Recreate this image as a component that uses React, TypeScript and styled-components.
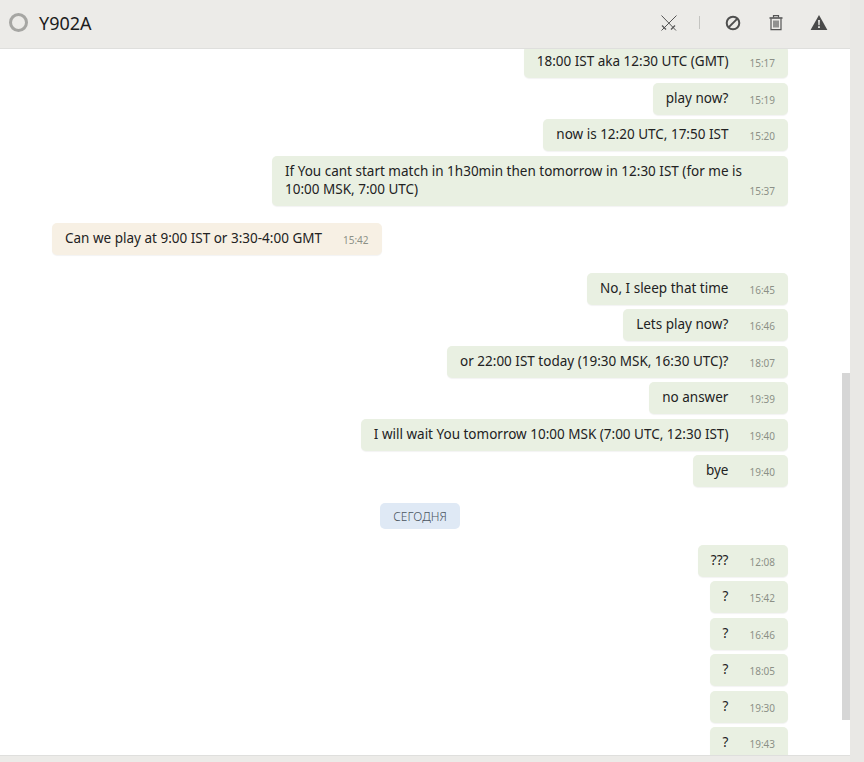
import React from "react";
import styled, { createGlobalStyle } from "styled-components";

type Message = { text: React.ReactNode; time: string; from?: "me" | "them"; gap?: number };

const before: Message[] = [
    { text: "18:00 IST aka 12:30 UTC (GMT)", time: "15:17" },
    { text: "play now?", time: "15:19" },
    { text: "now is 12:20 UTC, 17:50 IST", time: "15:20" },
    {
        text: "If You cant start match in 1h30min then tomorrow in 12:30 IST (for me is 10:00 MSK, 7:00 UTC)",
        time: "15:37",
        gap: 5,
    },
];

const after: Message[] = [
    { text: "No, I sleep that time", time: "16:45" },
    { text: "Lets play now?", time: "16:46" },
    { text: "or 22:00 IST today (19:30 MSK, 16:30 UTC)?", time: "18:07" },
    { text: "no answer", time: "19:39" },
    { text: "I will wait You tomorrow 10:00 MSK (7:00 UTC, 12:30 IST)", time: "19:40" },
    { text: "bye", time: "19:40" },
];

const today: Message[] = [
    { text: "???", time: "12:08" },
    { text: "?", time: "15:42" },
    { text: "?", time: "16:46" },
    { text: "?", time: "18:05" },
    { text: "?", time: "19:30" },
    { text: "?", time: "19:43" },
];

const Bubbles = ({ items }: { items: Message[] }) => (
    <Group>
        {items.map((m) => (
            <Bubble key={m.time + m.text} $from={m.from ?? "me"} $gap={m.gap ?? 21}>
                <BubbleText>{m.text}</BubbleText>
                <Time>{m.time}</Time>
            </Bubble>
        ))}
    </Group>
);

export default function App() {
    return (
        <>
            <GlobalStyle />
            <Page>
                <Main>
                    <Header>
                        <Contact>
                            <StatusRing />
                            <ContactName>Y902A</ContactName>
                        </Contact>
                        <Actions>
                            <IconSlot $width={40}>
                                <svg width="20" height="20" viewBox="0 0 20 20" fill="none" stroke="#555" strokeWidth="1">
                                    <path d="M3.5 2.5 L18 17.5" />
                                    <path d="M18.5 2.5 L3.5 17.5" />
                                    <path d="M4 12.5 L8 16.5" strokeWidth="1.2" />
                                    <path d="M17 12.5 L13 16.5" strokeWidth="1.2" />
                                </svg>
                            </IconSlot>
                            <Divider />
                            <IconSlot $width={42}>
                                <svg width="18" height="18" viewBox="0 0 18 18" fill="none" stroke="#4f4f4f" strokeWidth="2">
                                    <circle cx="9" cy="9" r="6.3" />
                                    <path d="M4.6 13.4 L13.4 4.6" />
                                </svg>
                            </IconSlot>
                            <IconSlot $width={43}>
                                <svg width="16" height="18" viewBox="0 0 16 18" fill="none" stroke="#555" strokeWidth="1.2">
                                    <path d="M1.5 4 H14.5" strokeWidth="1.6" />
                                    <path d="M5.5 3.5 V1.7 H10.5 V3.5" />
                                    <path d="M3 4.5 V15.6 H13 V4.5" />
                                    <path d="M6 6.5 V13.5 M8 6.5 V13.5 M10 6.5 V13.5" />
                                </svg>
                            </IconSlot>
                            <IconSlot $width={43}>
                                <svg width="18" height="18" viewBox="0 0 18 18">
                                    <path d="M9 1 L17.4 16 H0.6 Z" fill="#4a4a4a" />
                                    <path d="M8.1 6 H9.9 L9.6 11.3 H8.4 Z M8.1 12.3 H9.9 V14 H8.1 Z" fill="#ecebe8" />
                                </svg>
                            </IconSlot>
                        </Actions>
                    </Header>
                    <Body>
                        <MessageList>
                            <Feed>
                                <Bubbles items={before} />
                                <Incoming>
                                    <Bubbles items={[{ text: "Can we play at 9:00 IST or 3:30-4:00 GMT", time: "15:42", from: "them" }]} />
                                </Incoming>
                                <Bubbles items={after} />
                                <DateRow>
                                    <DateChip>СЕГОДНЯ</DateChip>
                                </DateRow>
                                <Bubbles items={today} />
                            </Feed>
                        </MessageList>
                        <ScrollTrack>
                            <ScrollThumb />
                        </ScrollTrack>
                    </Body>
                    <Footer />
                </Main>
                <SideRail />
            </Page>
        </>
    );
}

const GlobalStyle = createGlobalStyle`
    html, body {
        margin: 0;
        padding: 0;
        height: 100%;
        overflow: hidden;
        background: #ffffff;
    }
    * {
        box-sizing: border-box;
    }
`;

const Page = styled.div`
    display: flex;
    width: 864px;
    height: 762px;
    font-family: "Noto Sans", "Open Sans", sans-serif;
    color: #1f1f1f;
`;

const Main = styled.div`
    display: flex;
    flex-direction: column;
    width: 850px;
    height: 100%;
`;

const SideRail = styled.div`
    flex: 1;
    background: #e9e8e5;
`;

const Header = styled.header`
    display: flex;
    align-items: center;
    justify-content: space-between;
    height: 49px;
    flex-shrink: 0;
    padding: 0 10px 3px 9px;
    background: #ecebe8;
    border-bottom: 1px solid #dfdfdd;
`;

const Contact = styled.div`
    display: flex;
    align-items: center;
    gap: 11px;
`;

const StatusRing = styled.span`
    width: 19px;
    height: 19px;
    border-radius: 50%;
    border: 3px solid #a6a6a3;
`;

const ContactName = styled.span`
    font-size: 18px;
    color: #1c1c1c;
`;

const Actions = styled.div`
    display: flex;
    align-items: center;
`;

const IconSlot = styled.span<{ $width: number }>`
    display: flex;
    align-items: center;
    justify-content: center;
    width: ${(p) => p.$width}px;
    height: 24px;
`;

const Divider = styled.span`
    width: 1px;
    height: 13px;
    margin: 0 12px 0 11px;
    background: #c4c4c1;
`;

const Body = styled.div`
    display: flex;
    flex: 1;
    min-height: 0;
`;

const MessageList = styled.main`
    flex: 1;
    min-width: 0;
    overflow: hidden;
    background: #ffffff;
`;

const Feed = styled.div`
    display: flex;
    flex-direction: column;
    margin-top: -3px;
    padding: 0 54px 0 52px;
`;

const Group = styled.div`
    display: flex;
    flex-direction: column;
    gap: 4.5px;
`;

const Incoming = styled.div`
    margin: 17.5px 0;
`;

const Bubble = styled.div<{ $from: "me" | "them"; $gap: number }>`
    display: flex;
    align-items: flex-end;
    gap: ${(p) => p.$gap}px;
    align-self: ${(p) => (p.$from === "me" ? "flex-end" : "flex-start")};
    max-width: 516px;
    min-height: 32px;
    padding: 6px 13px 8px 13px;
    border-radius: 5px;
    background: ${(p) => (p.$from === "me" ? "#e9f0e2" : "#f7f0e4")};
    box-shadow: 0 1px 1px rgba(0, 0, 0, 0.05);
`;

const BubbleText = styled.span`
    font-size: 13.5px;
    line-height: 18px;
    color: #222;
`;

const Time = styled.span`
    flex-shrink: 0;
    font-size: 10px;
    line-height: 14px;
    color: #8c9087;
`;

const DateRow = styled.div`
    display: flex;
    justify-content: center;
    margin: 16px 0 15.5px;
`;

const DateChip = styled.span`
    display: flex;
    align-items: center;
    height: 26px;
    padding: 0 13px;
    border-radius: 5px;
    background: #dfe9f5;
    font-size: 12px;
    font-weight: 300;
    color: #4b5560;
`;

const ScrollTrack = styled.div`
    display: flex;
    flex-direction: column;
    width: 8px;
    padding-top: 324px;
    padding-bottom: 35px;
`;

const ScrollThumb = styled.div`
    flex: 1;
    background: #d6d6d6;
`;

const Footer = styled.footer`
    height: 7px;
    flex-shrink: 0;
    background: #ecebe8;
    border-top: 1px solid #dfdfdd;
`;
